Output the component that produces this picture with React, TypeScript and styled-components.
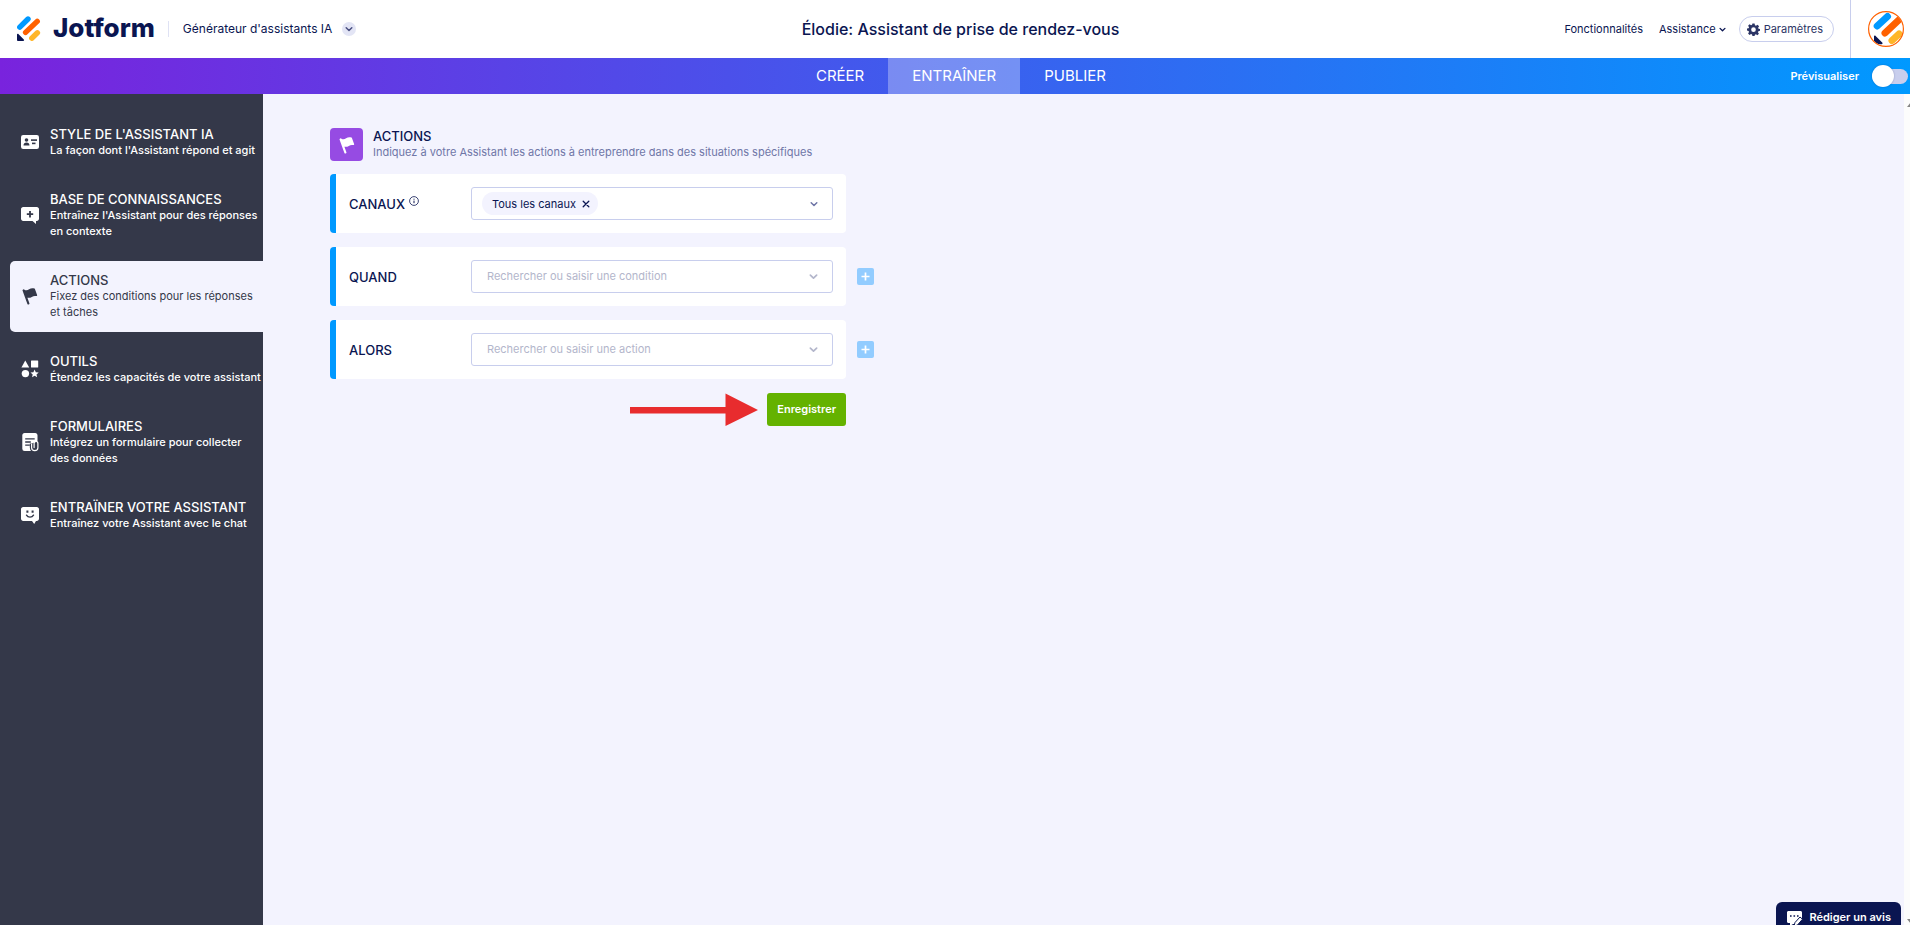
import React from "react";
import styled, { createGlobalStyle, css } from "styled-components";

const color = {
  navy: "#0a1551",
  slate: "#343849",
  page: "#f3f3fe",
  line: "#c8ceed",
  muted: "#6f76a7",
  hint: "#b3b6cb",
  blue: "#0099ff",
  green: "#64b200",
  purple: "#964be3",
};

const GlobalStyle = createGlobalStyle`
  *, *::before, *::after { box-sizing: border-box; }
  body {
    margin: 0;
    font-family: Inter, "Liberation Sans", sans-serif;
    font-size: 11px;
    line-height: 16px;
    color: ${color.navy};
    background: ${color.page};
  }
  button, input { font: inherit; color: inherit; }
  button { padding: 0; border: 0; background: none; cursor: pointer; }
  a { color: inherit; text-decoration: none; }
  h1, h2, p { margin: 0; }
  svg { display: block; flex: none; }
`;

const Page = styled.div`
  display: flex;
  flex-direction: column;
  min-height: 100vh;
`;

/* ---------- header ---------- */

const Header = styled.header`
  display: grid;
  grid-template-columns: 1fr auto 1fr;
  align-items: center;
  height: 58px;
  padding: 0 6px 0 17px;
  background: #fff;
`;

const Brand = styled.div`
  display: flex;
  align-items: center;
`;

const LogoLink = styled.a`
  display: flex;
  align-items: center;
  gap: 12px;
  padding: 0 13px 2px 0;
`;

const Wordmark = styled.span`
  font-size: 26px;
  line-height: 32px;
  font-weight: 800;
`;

const ProductButton = styled.button`
  display: flex;
  align-items: center;
  gap: 10px;
  padding-left: 14px;
  font-size: 12px;
  border-left: 1px solid #dfe2f4;
`;

const RoundChevron = styled.span`
  display: grid;
  place-items: center;
  width: 14px;
  height: 14px;
  border-radius: 50%;
  color: #4a5080;
  background: #e3e5f5;
`;

const AgentTitle = styled.h1`
  font-size: 16px;
  line-height: 24px;
  font-weight: 500;
`;

const HeaderRight = styled.div`
  display: flex;
  justify-content: flex-end;
  align-items: center;
  height: 58px;
`;

const Links = styled.nav`
  display: flex;
  align-items: center;
  gap: 16px;
  padding-right: 16px;
`;

const AssistanceButton = styled.button`
  display: flex;
  align-items: center;
  gap: 3px;
`;

const SettingsButton = styled.button`
  display: flex;
  align-items: center;
  gap: 4px;
  height: 26px;
  padding: 0 10px 0 7px;
  margin-left: -3px;
  border: 1px solid ${color.line};
  border-radius: 13px;
  color: #2c3565;
`;

const AvatarCell = styled.div`
  display: flex;
  align-items: center;
  height: 100%;
  padding-left: 17px;
  border-left: 1px solid ${color.line};
`;

/* ---------- step bar ---------- */

const StepBar = styled.div`
  display: grid;
  grid-template-columns: 1fr auto 1fr;
  align-items: stretch;
  height: 36px;
  padding: 0 2px 0 14px;
  color: #fff;
  background: linear-gradient(90deg, #7923dd, #0099ff);
`;

const Steps = styled.nav`
  display: flex;
  grid-column: 2;
`;

const Step = styled.a<{ $active?: boolean }>`
  display: flex;
  align-items: center;
  padding: 0 24px;
  font-size: 15px;
  background: ${(p) => (p.$active ? "rgba(255, 255, 255, 0.3)" : "transparent")};
`;

const Preview = styled.label`
  display: flex;
  align-items: center;
  justify-content: flex-end;
  gap: 13px;
  font-weight: 600;
`;

const Toggle = styled.input`
  appearance: none;
  display: flex;
  align-items: center;
  width: 36px;
  height: 15px;
  margin: 0;
  border-radius: 8px;
  background: ${color.line};
  cursor: pointer;

  &::before {
    content: "";
    flex: none;
    width: 22px;
    height: 22px;
    border-radius: 50%;
    background: #fff;
    box-shadow: 0 0 2px rgba(10, 21, 81, 0.3);
  }

  &:checked {
    justify-content: flex-end;
  }
`;

/* ---------- body ---------- */

const Body = styled.div`
  display: flex;
  flex: 1;
`;

const Sidebar = styled.nav`
  display: flex;
  flex-direction: column;
  flex: none;
  gap: 10px;
  width: 263px;
  padding: 21px 0 0 10px;
  background: ${color.slate};
`;

const SideItem = styled.a<{ $active?: boolean }>`
  display: flex;
  align-items: center;
  gap: 10px;
  padding: 11px 0 12px 10px;
  border-radius: 5px 0 0 5px;
  color: #fff;
  font-weight: 500;
  ${(p) =>
    p.$active &&
    css`
      color: ${color.slate};
      background: ${color.page};
      font-weight: 400;
    `}
`;

const SideTitle = styled.div`
  font-size: 13px;
  font-weight: 500;
`;

const Main = styled.main`
  flex: 1;
  min-width: 0;
  padding: 34px 24px 34px 67px;
`;

const ScrollRail = styled.div`
  display: flex;
  flex-direction: column;
  justify-content: space-between;
  width: 6px;
  padding: 8px 0 1px 3px;
  overflow: hidden;
  background: #fcfcfc;
`;

const Panel = styled.section`
  max-width: 516px;
`;

const PanelHead = styled.header`
  display: flex;
  align-items: flex-start;
  gap: 10px;
  margin-bottom: 13px;
`;

const PanelIcon = styled.div`
  display: grid;
  place-items: center;
  width: 33px;
  height: 33px;
  border-radius: 4px;
  color: #fff;
  background: ${color.purple};
`;

const PanelTitle = styled.h2`
  font-size: 13px;
  line-height: 16px;
  font-weight: 500;
`;

const PanelText = styled.p`
  color: ${color.muted};
`;

const Rules = styled.form`
  display: flex;
  flex-direction: column;
  gap: 14px;
`;

const RuleRow = styled.div`
  display: flex;
  align-items: center;
  gap: 11px;
  margin-right: -30px;
`;

const Card = styled.div`
  display: flex;
  align-items: center;
  flex: 1;
  max-width: 516px;
  padding: 13px;
  border-left: 6px solid ${color.blue};
  border-radius: 4px;
  background: #fff;
`;

const CardLabel = styled.label`
  display: flex;
  align-items: flex-start;
  gap: 4px;
  width: 122px;
  font-size: 13px;
  font-weight: 500;
`;

const Field = styled.div<{ $filled?: boolean }>`
  display: flex;
  align-items: center;
  flex: 1;
  height: 33px;
  padding: 0 14px 0 ${(p) => (p.$filled ? "10px" : "15px")};
  border: 1px solid ${color.line};
  border-radius: 3px;
  color: ${(p) => (p.$filled ? color.muted : color.hint)};
`;

const Input = styled.input`
  flex: 1;
  min-width: 0;
  height: 100%;
  padding: 0 0 2px;
  border: 0;
  outline: 0;
  background: none;
  color: ${color.navy};

  &::placeholder {
    color: ${color.hint};
    opacity: 1;
  }
`;

const Chip = styled.span`
  display: flex;
  align-items: center;
  gap: 6px;
  height: 23px;
  padding: 0 8px 0 10px;
  border-radius: 12px;
  color: ${color.navy};
  background: ${color.page};
`;

const AddButton = styled.button`
  display: grid;
  place-items: center;
  width: 17px;
  height: 17px;
  border-radius: 2px;
  color: #fff;
  background: #92ccff;
`;

const Footer = styled.div`
  display: flex;
  justify-content: flex-end;
  align-items: center;
  gap: 9px;
`;

const SaveButton = styled.button`
  height: 33px;
  padding: 0 10px 2px;
  border-radius: 3px;
  color: #fff;
  font-weight: 600;
  background: ${color.green};
`;

const FeedbackButton = styled.button`
  position: fixed;
  right: 9px;
  bottom: 0;
  display: flex;
  align-items: flex-start;
  gap: 6px;
  height: 23px;
  padding: 7px 10px 0;
  overflow: hidden;
  border-radius: 6px 6px 0 0;
  color: #fff;
  font-weight: 600;
  background: ${color.navy};
`;

/* ---------- drawings ---------- */

const LogoMark = () => (
  <svg width="24" height="25" viewBox="0 0 24 25" fill="none" strokeWidth="5.4" strokeLinecap="round" aria-hidden="true">
    <path d="M2.8 11.2 11 3" stroke="#0099ff" />
    <path d="M8.6 16.4 20.2 5.4" stroke="#ff6100" />
    <path d="M14.8 22.2 20.4 16.8" stroke="#ffb629" />
    <path d="M0 18.6v5.2c0 .8.4 1.2 1.2 1.2h5c.9 0 1.2-.9.6-1.5l-5.2-5.3C.9 17.500 0 17.800 0 18.600Z" fill="#0a1551" />
  </svg>
);

const Avatar = () => (
  <svg width="36" height="36" viewBox="0 0 36 36" fill="none" strokeLinecap="round" role="img" aria-label="Profil">
    <defs>
      <clipPath id="avatar-clip">
        <circle cx="18" cy="18" r="17" />
      </clipPath>
    </defs>
    <circle cx="18" cy="18" r="17.400" fill="#fff" />
    <g clipPath="url(#avatar-clip)" strokeWidth="7">
      <path d="M9.200 15 19.500 5.500" stroke="#0099ff" />
      <path d="M17 22 34 6" stroke="#ff6100" />
      <path d="M24 29.500 31 23" stroke="#ffb629" />
      <path d="M6 25.500c0-1 .9-1.300 1.600-.6l6.600 6.600c.7.700.3 1.800-.7 1.800H6Z" fill="#0a1551" />
    </g>
    <circle cx="18" cy="18" r="17.400" stroke="#ff6100" strokeWidth="1.200" />
  </svg>
);

const Chevron = ({ size = 8 }: { size?: number }) => (
  <svg width={size} height={size} viewBox="0 0 8 8" fill="none" stroke="currentColor" strokeWidth="1.500" strokeLinecap="round" strokeLinejoin="round" aria-hidden="true">
    <path d="M1.200 2.700 4 5.500l2.800-2.800" />
  </svg>
);

const Gear = () => (
  <svg width="13" height="13" viewBox="0 0 24 24" aria-hidden="true">
    <path
      fill="currentColor"
      fillRule="evenodd"
      d="M10 1h4l.7 3.200 1.900.8 2.800-1.800 2.900 2.900-1.800 2.700.8 2L24 11v3.500l-3 .6-.8 1.900 1.800 2.800-2.800 2.700-2.700-1.700-1.900.8L14 24h-4l-.7-2.900-1.900-.8-2.700 1.700L2 19.300l1.700-2.800-.8-1.900L0 14v-3.700l3-.6.800-1.900L2 5l2.800-2.800 2.700 1.800 1.900-.8ZM12 8a4.300 4.300 0 1 0 0 8.600A4.300 4.300 0 0 0 12 8Z"
    />
  </svg>
);

const Flag = () => (
  <svg width="20" height="20" viewBox="0 0 20 20" fill="currentColor" aria-hidden="true">
    <path d="M2.600 4.700c-.2-.6.100-1.100.7-1.300.6-.2 1.100 0 1.400.5 1.600.6 3 .3 4.400-.6 1.500-.9 3.200-1.400 5.300-.7.400.1.600.4.700.8l2 5.500c.2.600-.2 1.200-.9 1.100-1.700-.3-3 0-4.400.9-1.300.8-2.700 1.200-4.400.8l2 5.500c.2.600-.1 1.100-.7 1.300-.5.200-1.100-.1-1.300-.6Z" />
  </svg>
);

const IdCard = () => (
  <svg width="20" height="20" viewBox="0 0 20 20" aria-hidden="true">
    <rect x="1" y="3" width="18" height="14" rx="2.200" fill="currentColor" />
    <g fill={color.slate}>
      <circle cx="6.500" cy="8" r="1.800" />
      <path d="M3.500 13.500c0-2 1.200-3 3-3s3 1 3 3Z" />
      <rect x="11" y="7.300" width="6" height="1.600" />
      <rect x="12" y="10.600" width="3.500" height="1.600" />
    </g>
  </svg>
);

const ChatPlus = () => (
  <svg width="20" height="20" viewBox="0 0 20 20" aria-hidden="true">
    <path fill="currentColor" d="M3.200 2h13.600C18 2 19 3 19 4.200v9.600c0 1.200-1 2.200-2.200 2.200H16v3l-3.500-3H3.200C2 16 1 15 1 13.800V4.200C1 3 2 2 3.200 2Z" />
    <path stroke={color.slate} strokeWidth="1.800" d="M10 6v6.400M6.800 9.200h6.400" />
  </svg>
);

const Shapes = () => (
  <svg width="20" height="20" viewBox="0 0 20 20" fill="currentColor" aria-hidden="true">
    <path d="M5.300 1.600 9.200 8.600H1.400Z" />
    <rect x="11" y="1.600" width="7.200" height="7" rx=".5" />
    <circle cx="5.400" cy="14.600" r="3.700" />
    <path d="m14.600 10.500 1.200 2.700 2.900.3-2.200 1.900.7 2.900-2.600-1.500-2.600 1.500.7-2.900-2.200-1.900 2.900-.3Z" />
  </svg>
);

const FormClip = () => (
  <svg width="20" height="20" viewBox="0 0 20 20" fill="none" aria-hidden="true">
    <path fill="currentColor" d="M4.600 1h10.600c1.400 0 2.300 1 2.300 2.300v5.400l-2 1-3.200 1.800v7.500H4.600A2.300 2.300 0 0 1 2.300 16.700V3.300C2.300 2 3.200 1 4.600 1Z" />
    <path stroke={color.slate} strokeWidth="1.300" d="M5.200 6.800h9.500M5.200 10h5.600M5.200 13.200h4.600" />
    <path stroke={color.slate} strokeWidth="3.400" d="M11.500 11.500v4c0 4.300 6.400 4.300 6.400 0V11" />
    <path stroke="currentColor" strokeWidth="1.200" strokeLinecap="round" d="M11.600 12v3.800c0 3.800 6.300 3.800 6.300 0v-4.400c0-2.600-3.800-2.600-3.800 0v4.200" />
  </svg>
);

const ChatSmile = () => (
  <svg width="20" height="20" viewBox="0 0 20 20" fill="none" aria-hidden="true">
    <path fill="currentColor" d="M3.200 2h13.600C18 2 19 3 19 4.200v9.600c0 1.200-1 2.200-2.200 2.200H16l-1.800 3-2.200-3H3.200C2 16 1 15 1 13.800V4.200C1 3 2 2 3.200 2Z" />
    <path stroke={color.slate} strokeWidth="2" d="M7.400 5.500v2.200M12.600 5.500v2.200" />
    <path stroke={color.slate} strokeWidth="1.400" strokeLinecap="round" d="M6.500 10.200c1.500 2.600 5.500 2.600 7 0" />
  </svg>
);

const Info = () => (
  <svg width="10" height="10" viewBox="0 0 10 10" fill="none" stroke="currentColor" role="img" aria-label="Informations">
    <circle cx="5" cy="5" r="4.400" strokeWidth=".8" />
    <path d="M5 4.600v2.600M5 2.700v1" strokeWidth="1" />
  </svg>
);

const Cross = () => (
  <svg width="8" height="8" viewBox="0 0 8 8" stroke="currentColor" strokeWidth="1.300" strokeLinecap="round" aria-hidden="true">
    <path d="M1.200 1.200l5.600 5.600M6.800 1.200 1.200 6.800" />
  </svg>
);

const Plus = () => (
  <svg width="9" height="9" viewBox="0 0 9 9" stroke="currentColor" strokeWidth="1.700" aria-hidden="true">
    <path d="M4.500.5v8M.5 4.500h8" />
  </svg>
);

const Arrow = () => (
  <svg width="128" height="33" viewBox="0 0 128 33" fill="#e82c2e" aria-hidden="true">
    <path d="M0 14h95.500V.6L128 17 95.500 33V20.600H0Z" />
  </svg>
);

const Triangle = ({ down }: { down?: boolean }) => (
  <svg width="8" height="5" viewBox="0 0 8 5" fill="#868686" aria-hidden="true">
    <path d={down ? "M0 0h8L4 5Z" : "M0 5h8L4 0Z"} />
  </svg>
);

const FeedbackIcon = () => (
  <svg width="17" height="17" viewBox="0 0 17 17" fill="none" aria-hidden="true">
    <path fill="#fff" d="M2.500 2h12c.9 0 1.500.6 1.500 1.500V9l-6 6H7l-3 2v-3H2.500C1.600 14 1 13.400 1 12.500v-9C1 2.600 1.600 2 2.500 2Z" />
    <path stroke={color.navy} strokeWidth="1.600" d="M4 7h1.600M7.500 7h1.600M11 7h1.600" />
    <path fill="#fff" stroke={color.navy} d="m14 8 2.500 2.200-5 5.800-3.500 1 1-3.500Z" />
  </svg>
);

/* ---------- content ---------- */

const sideItems = [
  { icon: <IdCard />, title: "STYLE DE L'ASSISTANT IA", text: "La façon dont l'Assistant répond et agit" },
  { icon: <ChatPlus />, title: "BASE DE CONNAISSANCES", text: "Entraînez l'Assistant pour des réponses en contexte" },
  { icon: <Flag />, title: "ACTIONS", text: "Fixez des conditions pour les réponses et tâches", active: true },
  { icon: <Shapes />, title: "OUTILS", text: "Étendez les capacités de votre assistant" },
  { icon: <FormClip />, title: "FORMULAIRES", text: "Intégrez un formulaire pour collecter des données" },
  { icon: <ChatSmile />, title: "ENTRAÏNER VOTRE ASSISTANT", text: "Entraînez votre Assistant avec le chat" },
];

const conditions = [
  { id: "quand", label: "QUAND", placeholder: "Rechercher ou saisir une condition" },
  { id: "alors", label: "ALORS", placeholder: "Rechercher ou saisir une action" },
];

export default function App() {
  return (
    <Page>
      <GlobalStyle />
      <Header>
        <Brand>
          <LogoLink href="#">
            <LogoMark />
            <Wordmark>Jotform</Wordmark>
          </LogoLink>
          <ProductButton type="button">
            Générateur d'assistants IA
            <RoundChevron>
              <Chevron />
            </RoundChevron>
          </ProductButton>
        </Brand>
        <AgentTitle>Élodie: Assistant de prise de rendez-vous</AgentTitle>
        <HeaderRight>
          <Links>
            <a href="#">Fonctionnalités</a>
            <AssistanceButton type="button">
              Assistance
              <Chevron size={7} />
            </AssistanceButton>
            <SettingsButton type="button">
              <Gear />
              Paramètres
            </SettingsButton>
          </Links>
          <AvatarCell>
            <Avatar />
          </AvatarCell>
        </HeaderRight>
      </Header>

      <StepBar>
        <Steps>
          <Step href="#">CRÉER</Step>
          <Step href="#" $active aria-current="page">
            ENTRAÎNER
          </Step>
          <Step href="#">PUBLIER</Step>
        </Steps>
        <Preview>
          Prévisualiser
          <Toggle type="checkbox" role="switch" />
        </Preview>
      </StepBar>

      <Body>
        <Sidebar>
          {sideItems.map((item) => (
            <SideItem key={item.title} href="#" $active={item.active}>
              {item.icon}
              <div>
                <SideTitle>{item.title}</SideTitle>
                {item.text}
              </div>
            </SideItem>
          ))}
        </Sidebar>

        <Main>
          <Panel>
            <PanelHead>
              <PanelIcon>
                <Flag />
              </PanelIcon>
              <div>
                <PanelTitle>ACTIONS</PanelTitle>
                <PanelText>Indiquez à votre Assistant les actions à entreprendre dans des situations spécifiques</PanelText>
              </div>
            </PanelHead>
            <Rules>
              <RuleRow>
                <Card>
                  <CardLabel htmlFor="canaux">
                    CANAUX
                    <Info />
                  </CardLabel>
                  <Field $filled>
                    <Chip>
                      Tous les canaux
                      <button type="button" aria-label="Retirer Tous les canaux">
                        <Cross />
                      </button>
                    </Chip>
                    <Input id="canaux" type="text" />
                    <Chevron />
                  </Field>
                </Card>
              </RuleRow>
              {conditions.map((row) => (
                <RuleRow key={row.id}>
                  <Card>
                    <CardLabel htmlFor={row.id}>{row.label}</CardLabel>
                    <Field>
                      <Input id={row.id} type="text" placeholder={row.placeholder} />
                      <Chevron size={9} />
                    </Field>
                  </Card>
                  <AddButton type="button" aria-label={`Ajouter ${row.label}`}>
                    <Plus />
                  </AddButton>
                </RuleRow>
              ))}
              <Footer>
                <Arrow />
                <SaveButton type="submit">Enregistrer</SaveButton>
              </Footer>
            </Rules>
          </Panel>
        </Main>

        <ScrollRail aria-hidden="true">
          <Triangle />
          <Triangle down />
        </ScrollRail>
      </Body>

      <FeedbackButton type="button">
        <FeedbackIcon />
        Rédiger un avis
      </FeedbackButton>
    </Page>
  );
}
